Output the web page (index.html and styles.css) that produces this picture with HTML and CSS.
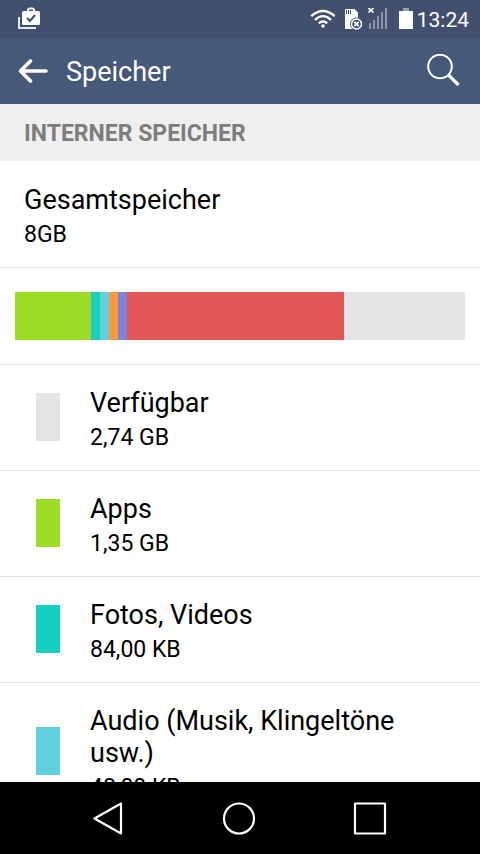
FILE: index.html
```html
<!DOCTYPE html>
<html lang="de">
<head>
<meta charset="utf-8">
<meta name="viewport" content="width=device-width, initial-scale=1">
<title>Speicher</title>
<link rel="stylesheet" href="styles.css">
</head>
<body>
<div class="statusbar">
  <svg class="status-icon" width="24" height="24" viewBox="0 0 24 24" aria-hidden="true">
    <path d="M1 10v11h17" fill="none" stroke="#e4e8ef" stroke-width="2"/>
    <path d="M10 5V3.500q0-2 2-2h2q2 0 2 2V5" fill="none" stroke="#fff" stroke-width="2"/>
    <rect x="4" y="4" width="18" height="14" rx="1.500" fill="#fff"/>
    <path d="M9 11l3 3 5-6" fill="none" stroke="#42506e" stroke-width="2"/>
  </svg>
  <div class="status-right">
    <svg width="26" height="22" viewBox="0 0 26 22" aria-hidden="true">
      <g fill="none" stroke="#fff" stroke-width="2.200">
        <path d="M1.200 8.200Q13-2.200 24.800 8.200"/>
        <path d="M5 12Q13 4.400 21 12"/>
        <path d="M8.800 15.400Q13 11.400 17.200 15.400"/>
      </g>
      <circle cx="13" cy="18" r="1.800" fill="#fff"/>
    </svg>
    <svg class="sd" width="18" height="22" viewBox="0 0 18 22" aria-hidden="true">
      <path d="M0 1.500Q0 1 1 1h8.500L13 4.500V21H0z" fill="#fff"/>
      <path d="M1.500 2v4M3.500 2v4M5.500 2v4" stroke="#42506e" stroke-width="1"/>
      <circle cx="11.500" cy="16" r="6.500" fill="#42506e"/>
      <circle cx="11.500" cy="16" r="5" fill="#42506e" stroke="#fff" stroke-width="1.500"/>
      <path d="M9.300 13.800l4.400 4.400M13.700 13.800l-4.400 4.400" stroke="#fff" stroke-width="1.800"/>
    </svg>
    <svg class="signal" width="20" height="22" viewBox="0 0 20 22" aria-hidden="true">
      <path d="M1 15h2v6H1zM5 12h2v9H5zM9 8h2v13H9zM13 4h2v17h-2zM17 0h2v21h-2z" fill="#8d96a8"/>
      <path d="M.5 0l5 4.500M5.500 0l-5 4.500" stroke="#fff" stroke-width="1.600"/>
    </svg>
    <svg class="battery" width="14" height="22" viewBox="0 0 14 22" aria-hidden="true">
      <path d="M4 0h6v3H4z" fill="#9ca4b3"/>
      <path d="M0 3h14v18H0z" fill="#fff"/>
    </svg>
    <time class="clock">13:24</time>
  </div>
</div>

<header class="appbar">
  <button class="icon-button" type="button" aria-label="Zurück">
    <svg width="30" height="24" viewBox="0 0 30 24" aria-hidden="true">
      <path d="M12.500 2L2.500 12l10 10M3 12h25" fill="none" stroke="#fff" stroke-width="3.600" stroke-linecap="round" stroke-linejoin="round"/>
    </svg>
  </button>
  <h1 class="title">Speicher</h1>
  <button class="icon-button" type="button" aria-label="Suchen">
    <svg width="34" height="34" viewBox="0 0 34 34" aria-hidden="true">
      <circle cx="14" cy="12.500" r="11.800" fill="none" stroke="#fff" stroke-width="2"/>
      <path d="M22.500 21l10 10" stroke="#fff" stroke-width="3.200"/>
    </svg>
  </button>
</header>

<main class="content">
  <h2 class="section">INTERNER SPEICHER</h2>
  <div class="total">
    <div class="name">Gesamtspeicher</div>
    <div class="size">8GB</div>
  </div>
  <div class="usage">
    <div class="bar" role="img" aria-label="Speicherbelegung">
      <span class="part apps" style="flex-grow:76"></span>
      <span class="part photos" style="flex-grow:9"></span>
      <span class="part audio" style="flex-grow:9"></span>
      <span class="part downloads" style="flex-grow:9"></span>
      <span class="part cache" style="flex-grow:9"></span>
      <span class="part misc" style="flex-grow:217"></span>
      <span class="part free" style="flex-grow:121"></span>
    </div>
  </div>
  <ul class="list">
    <li class="row"><span class="swatch free"></span><div class="label"><div class="name">Verfügbar</div><div class="size">2,74 GB</div></div></li>
    <li class="row"><span class="swatch apps"></span><div class="label"><div class="name">Apps</div><div class="size">1,35 GB</div></div></li>
    <li class="row"><span class="swatch photos"></span><div class="label"><div class="name">Fotos, Videos</div><div class="size">84,00 KB</div></div></li>
    <li class="row"><span class="swatch audio"></span><div class="label"><div class="name">Audio (Musik, Klingeltöne usw.)</div><div class="size">48,00 KB</div></div></li>
  </ul>
</main>

<nav class="navbar">
  <button class="icon-button" type="button" aria-label="Zurück">
    <svg width="34" height="34" viewBox="0 0 34 34" aria-hidden="true">
      <path d="M30 2.500v30L3.500 17.500z" fill="none" stroke="#fff" stroke-width="2.200" stroke-linejoin="round"/>
    </svg>
  </button>
  <button class="icon-button" type="button" aria-label="Startseite">
    <svg width="34" height="34" viewBox="0 0 34 34" aria-hidden="true">
      <circle cx="17" cy="17.500" r="15" fill="none" stroke="#fff" stroke-width="2.200"/>
    </svg>
  </button>
  <button class="icon-button" type="button" aria-label="Übersicht">
    <svg width="34" height="34" viewBox="0 0 34 34" aria-hidden="true">
      <rect x="2" y="2.500" width="30" height="30" fill="none" stroke="#fff" stroke-width="2.200" stroke-linejoin="round"/>
    </svg>
  </button>
</nav>
</body>
</html>
```
FILE: styles.css
```css
* {
  box-sizing: border-box;
}

body {
  margin: 0;
  height: 100vh;
  display: flex;
  flex-direction: column;
  overflow: hidden;
  background: #fff;
  color: #000;
  font-family: Roboto, sans-serif;
}

svg {
  display: block;
}

.statusbar {
  flex: none;
  display: flex;
  align-items: center;
  justify-content: space-between;
  height: 38px;
  padding: 0 11px 0 18px;
  background: #42506e;
}

.status-right {
  display: flex;
  align-items: center;
}

.sd {
  margin-left: 9px;
}

.signal {
  margin-left: 5px;
}

.battery {
  margin-left: 11px;
}

.clock {
  padding-top: 2px;
  margin-left: 4px;
  color: #fff;
  font-size: 21px;
  line-height: 24px;
}

.appbar {
  flex: none;
  display: flex;
  align-items: center;
  height: 66px;
  padding: 0 20px 0 18px;
  background: #475979;
}

.icon-button {
  padding: 0;
  border: 0;
  background: none;
}

.title {
  flex: 1;
  margin: 0 0 0 18px;
  padding-top: 2px;
  color: #fff;
  font-size: 27px;
  font-weight: 400;
  line-height: 32px;
}

.content {
  flex: 1;
  min-height: 0;
  overflow: hidden;
}

.section {
  margin: 0;
  padding: 16px 24px 13px;
  background: #efefef;
  color: #7d7d7d;
  font-size: 23px;
  font-weight: 700;
  line-height: 28px;
}

.total {
  padding: 23px 24px 19px;
  border-bottom: 1px solid #e4e4e4;
}

.name {
  font-size: 27px;
  line-height: 32px;
}

.size {
  margin-top: 5px;
  font-size: 23px;
  line-height: 27px;
}

.usage {
  padding: 24px 15px;
  border-bottom: 1px solid #e4e4e4;
}

.bar {
  display: flex;
  height: 48px;
}

.part {
  flex: 0 1 0;
}

.list {
  margin: 0;
  padding: 0;
  list-style: none;
}

.row {
  display: flex;
  align-items: center;
  gap: 30px;
  padding: 0 36px 1px;
  border-bottom: 1px solid #e4e4e4;
}

.label {
  padding: 22px 0 18px;
}

.swatch {
  flex: none;
  width: 24px;
  height: 48px;
}

.free { background: #e4e4e4; }
.apps { background: #99db27; }
.photos { background: #15d0be; }
.audio { background: #5fd0de; }
.downloads { background: #fb993b; }
.cache { background: #7d82df; }
.misc { background: #e35457; }

.navbar {
  flex: none;
  display: flex;
  align-items: center;
  justify-content: center;
  gap: 97px;
  height: 72px;
  padding-right: 2px;
  background: #000;
}
```
